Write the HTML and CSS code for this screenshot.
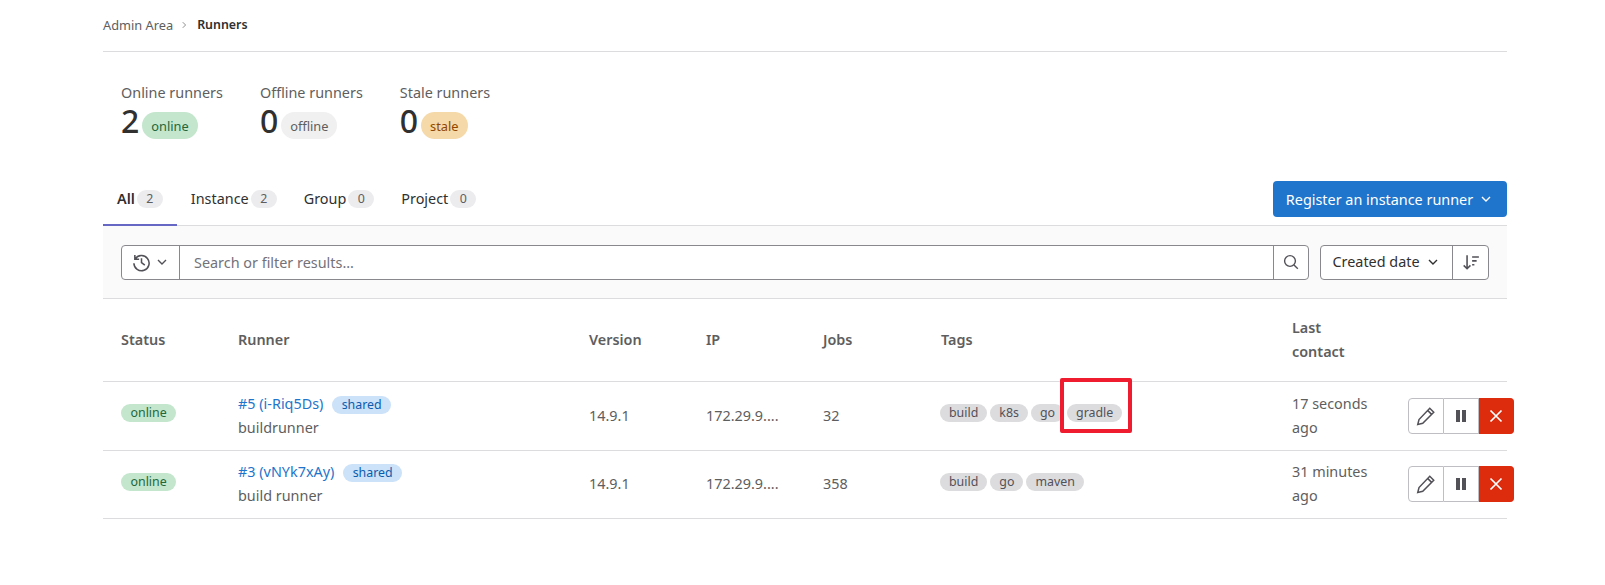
FILE: index.html
```html
<!DOCTYPE html>
<html lang="en">
<head>
    <meta charset="UTF-8">
    <meta name="viewport" content="width=device-width, initial-scale=1.0">
    <title>Runners</title>
    <link rel="stylesheet" href="styles.css">
</head>
<body>
    <div class="container">
        <nav class="breadcrumbs">
            <a href="#">Admin Area</a>
            <svg class="crumb-sep" viewBox="0 0 16 16"><path d="M6 3.5 10.5 8 6 12.5"/></svg>
            <b>Runners</b>
        </nav>

        <div class="stats">
            <div class="stat">
                <div class="stat-label">Online runners</div>
                <div class="stat-value">2 <span class="badge badge-online">online</span></div>
            </div>
            <div class="stat">
                <div class="stat-label">Offline runners</div>
                <div class="stat-value">0 <span class="badge badge-offline">offline</span></div>
            </div>
            <div class="stat">
                <div class="stat-label">Stale runners</div>
                <div class="stat-value">0 <span class="badge badge-stale">stale</span></div>
            </div>
        </div>

        <div class="tabs-row">
            <ul class="tabs">
                <li class="tab active">All <span class="count">2</span></li>
                <li class="tab">Instance <span class="count">2</span></li>
                <li class="tab">Group <span class="count">0</span></li>
                <li class="tab">Project <span class="count">0</span></li>
            </ul>
            <button class="btn-primary">Register an instance runner
                <svg class="chevron" viewBox="0 0 16 16"><path d="M4 6 8 10 12 6"/></svg>
            </button>
        </div>

        <div class="filter-bar">
            <div class="search">
                <div class="history">
                    <svg class="icon icon-history" viewBox="0 0 16 16"><path d="M2.4 1.6v3.6H6M2.6 5.1A6.4 6.4 0 1 1 1.6 8.6M8 4.4V8l2.8 2.2"/></svg>
                    <svg class="chevron" viewBox="0 0 16 16"><path d="M4 6 8 10 12 6"/></svg>
                </div>
                <input class="search-input" type="text" placeholder="Search or filter results...">
                <div class="search-btn">
                    <svg class="icon" viewBox="0 0 16 16"><circle cx="7" cy="7" r="5.4"/><path d="M11 11l3.8 3.8"/></svg>
                </div>
            </div>
            <div class="sort">
                <div class="sort-field">Created date
                    <svg class="chevron" viewBox="0 0 16 16"><path d="M4 6 8 10 12 6"/></svg>
                </div>
                <div class="sort-dir">
                    <svg class="icon icon-sort" viewBox="0 0 16 16"><path d="M4.5 2v12M1.5 11l3 3 3-3M9 3.5h6M9 7h4M9 10.5h2"/></svg>
                </div>
            </div>
        </div>

        <table class="runners">
            <thead>
                <tr>
                    <th class="col-status">Status</th>
                    <th class="col-runner">Runner</th>
                    <th class="col-version">Version</th>
                    <th class="col-ip">IP</th>
                    <th class="col-jobs">Jobs</th>
                    <th class="col-tags">Tags</th>
                    <th class="col-contact">Last contact</th>
                    <th class="col-actions"></th>
                </tr>
            </thead>
            <tbody>
                <tr>
                    <td><div class="tags"><span class="badge badge-online">online</span></div></td>
                    <td>
                        <div><a href="#">#5 (i-Riq5Ds)</a> <span class="badge badge-shared">shared</span></div>
                        <div>buildrunner</div>
                    </td>
                    <td>14.9.1</td>
                    <td>172.29.9....</td>
                    <td>32</td>
                    <td>
                        <div class="tags">
                            <span class="badge badge-tag">build</span>
                            <span class="badge badge-tag">k8s</span>
                            <span class="badge badge-tag">go</span>
                            <span class="badge badge-tag marked">gradle</span>
                        </div>
                    </td>
                    <td>17 seconds ago</td>
                    <td>
                        <div class="actions">
                            <button class="act"><svg class="icon icon-edit" viewBox="0 0 16 16"><path d="M11 1.8l3.2 3.2-8.8 8.8-4 1 1-4zM9.3 3.5l3.2 3.2"/></svg></button>
                            <button class="act"><span class="pause"></span></button>
                            <button class="act act-delete"><svg class="icon icon-close" viewBox="0 0 16 16"><path d="M2.5 2.5l11 11M13.5 2.5l-11 11"/></svg></button>
                        </div>
                    </td>
                </tr>
                <tr>
                    <td><div class="tags"><span class="badge badge-online">online</span></div></td>
                    <td>
                        <div><a href="#">#3 (vNYk7xAy)</a> <span class="badge badge-shared">shared</span></div>
                        <div>build runner</div>
                    </td>
                    <td>14.9.1</td>
                    <td>172.29.9....</td>
                    <td>358</td>
                    <td>
                        <div class="tags">
                            <span class="badge badge-tag">build</span>
                            <span class="badge badge-tag">go</span>
                            <span class="badge badge-tag">maven</span>
                        </div>
                    </td>
                    <td>31 minutes ago</td>
                    <td>
                        <div class="actions">
                            <button class="act"><svg class="icon icon-edit" viewBox="0 0 16 16"><path d="M11 1.8l3.2 3.2-8.8 8.8-4 1 1-4zM9.3 3.5l3.2 3.2"/></svg></button>
                            <button class="act"><span class="pause"></span></button>
                            <button class="act act-delete"><svg class="icon icon-close" viewBox="0 0 16 16"><path d="M2.5 2.5l11 11M13.5 2.5l-11 11"/></svg></button>
                        </div>
                    </td>
                </tr>
            </tbody>
        </table>
    </div>
</body>
</html>
```

FILE: styles.css
```css
* {
    box-sizing: border-box;
}
body {
    margin: 0;
    background-color: #fff;
    color: #525252;
    font-family: "Noto Sans", Arial, sans-serif;
    font-size: 14.4px;
    line-height: 20px;
}
a {
    color: #1f75cb;
    text-decoration: none;
}
svg {
    fill: none;
    stroke: currentColor;
}
.container {
    width: 1404px;
    margin-left: 103px;
}
.icon {
    width: 16px;
    height: 16px;
    stroke-width: 1.4;
}
.icon-history {
    width: 19px;
    height: 19px;
    stroke-width: 1.3;
}
.icon-sort {
    width: 18px;
    height: 18px;
}
.icon-edit {
    width: 20px;
    height: 20px;
    stroke-width: 1.2;
}
.icon-close {
    stroke-width: 1.7;
}
.chevron {
    width: 16px;
    height: 16px;
    stroke-width: 1.4;
}

.breadcrumbs {
    height: 52px;
    border-bottom: 1px solid #dcdcde;
    display: flex;
    align-items: center;
    padding-bottom: 1px;
    font-size: 12.8px;
}
.breadcrumbs a {
    color: #5e5e5e;
}
.breadcrumbs b {
    color: #303030;
    font-size: 12.4px;
    font-weight: 600;
}
.crumb-sep {
    width: 10px;
    height: 10px;
    margin: 0 8px 0 6px;
    stroke-width: 1.3;
    color: #737278;
}

.stats {
    display: flex;
    padding: 31px 0 0 18px;
    height: 129px;
}
.stat {
    margin-right: 37px;
}
.stat-label {
    line-height: 20px;
    color: #5e5e5e;
}
.stat-value {
    color: #303030;
    font-size: 32px;
    font-weight: 500;
    line-height: 36px;
    display: flex;
    align-items: flex-end;
    gap: 3px;
}
.badge {
    display: inline-block;
    font-size: 12.4px;
    font-weight: 400;
    line-height: 18px;
    border-radius: 12px;
    padding: 0 9.5px;
    white-space: nowrap;
}
.stat-value .badge {
    line-height: 27px;
    height: 27px;
    font-size: 12.8px;
    padding: 1px 9px 0;
    border-radius: 14px;
}
.badge-online {
    background-color: #c3e6cd;
    color: #24663b;
}
.badge-offline {
    background-color: #f0f0f0;
    color: #5e5e5e;
}
.badge-stale {
    background-color: #f5d9a8;
    color: #8f4700;
}
.badge-shared {
    margin-left: 5px;
    background-color: #cbe2f9;
    color: #0b5cad;
}
.badge-tag {
    padding: 0 9px;
    background-color: #dcdcde;
    color: #535158;
}

.tabs-row {
    display: flex;
    justify-content: space-between;
    align-items: flex-start;
    height: 45px;
    border-bottom: 1px solid #dcdcde;
}
.tabs {
    display: flex;
    list-style: none;
    margin: 0;
    padding: 0;
}
.tab {
    height: 45px;
    padding: 8px 13px 0 14px;
    display: flex;
    align-items: flex-start;
    gap: 2px;
    line-height: 20px;
    color: #303030;
}
.tab.active {
    padding-right: 14px;
    font-weight: 600;
    border-bottom: 2px solid #6666c4;
}
.count {
    font-size: 12.4px;
    font-weight: 400;
    line-height: 18px;
    min-width: 26px;
    margin-top: 1px;
    text-align: center;
    background-color: #ececef;
    color: #5e5e5e;
    border-radius: 9px;
}
.btn-primary {
    width: 234px;
    height: 36px;
    border: 0;
    border-radius: 4px;
    background-color: #1f75cb;
    color: #fff;
    font-family: inherit;
    font-size: 14.4px;
    display: flex;
    align-items: center;
    justify-content: center;
    gap: 5px;
}

.filter-bar {
    display: flex;
    gap: 11px;
    align-items: center;
    height: 73px;
    padding: 0 18px;
    background-color: #fafafa;
    border-bottom: 1px solid #dcdcde;
}
.search,
.sort {
    display: flex;
    height: 35px;
    background-color: #fff;
    border: 1px solid #89888d;
    border-radius: 4px;
}
.search {
    flex: 1;
}
.history {
    width: 58px;
    display: flex;
    align-items: center;
    justify-content: center;
    gap: 3px;
    padding-left: 1px;
    color: #535158;
    border-right: 1px solid #89888d;
}
.search-input {
    flex: 1;
    border: 0;
    outline: 0;
    padding: 0 14px;
    font-family: inherit;
    font-size: 14.4px;
    background: transparent;
}
.search-input::placeholder {
    color: #737278;
}
.search-btn {
    width: 35px;
    display: flex;
    align-items: center;
    justify-content: center;
    color: #535158;
    border-left: 1px solid #89888d;
}
.sort-field {
    width: 132px;
    display: flex;
    align-items: center;
    justify-content: center;
    gap: 5px;
    color: #303030;
    border-right: 1px solid #89888d;
}
.sort-dir {
    width: 35px;
    display: flex;
    align-items: center;
    justify-content: center;
    color: #535158;
}

.runners {
    width: 1404px;
    table-layout: fixed;
    border-collapse: collapse;
}
.runners th {
    height: 82px;
    padding: 1px 18px 0;
    text-align: left;
    font-weight: 600;
    line-height: 24px;
    color: #5e5e5e;
    border-bottom: 1px solid #dcdcde;
}
.runners td {
    padding: 0 18px;
    height: 68px;
    line-height: 24px;
    color: #5e5e5e;
    border-bottom: 1px solid #dcdcde;
}
.runners tbody tr:first-child td {
    height: 69px;
}
.col-status { width: 117px; }
.col-runner { width: 351px; }
.col-version { width: 117px; }
.col-ip { width: 117px; }
.col-jobs { width: 118px; }
.col-tags { width: 351px; }
.col-contact { width: 116px; }
.tags {
    display: flex;
    gap: 3px;
    margin-bottom: 6px;
}
tr:last-child .tags {
    margin-bottom: 4px;
}
td:nth-child(6) .tags {
    margin-left: -1px;
}
.marked {
    position: relative;
}
.marked::after {
    content: "";
    position: absolute;
    top: -26px;
    bottom: -11px;
    left: -7px;
    right: -10px;
    border: 4px solid #ee1c2e;
    border-radius: 2px;
}
.actions {
    display: flex;
    width: 106px;
    height: 36px;
}
.act {
    flex: 1;
    display: flex;
    align-items: center;
    justify-content: center;
    padding: 0;
    background-color: #fff;
    color: #535158;
    border: 1px solid #bfbfc3;
    border-left: 0;
}
.act:first-child {
    border-left: 1px solid #bfbfc3;
    border-radius: 4px 0 0 4px;
}
.act-delete {
    background-color: #dd2b0e;
    border-color: #dd2b0e;
    color: #fff;
    border-radius: 0 4px 4px 0;
}
.pause {
    width: 10px;
    height: 12px;
    border-left: 4px solid #535158;
    border-right: 4px solid #535158;
}
```
